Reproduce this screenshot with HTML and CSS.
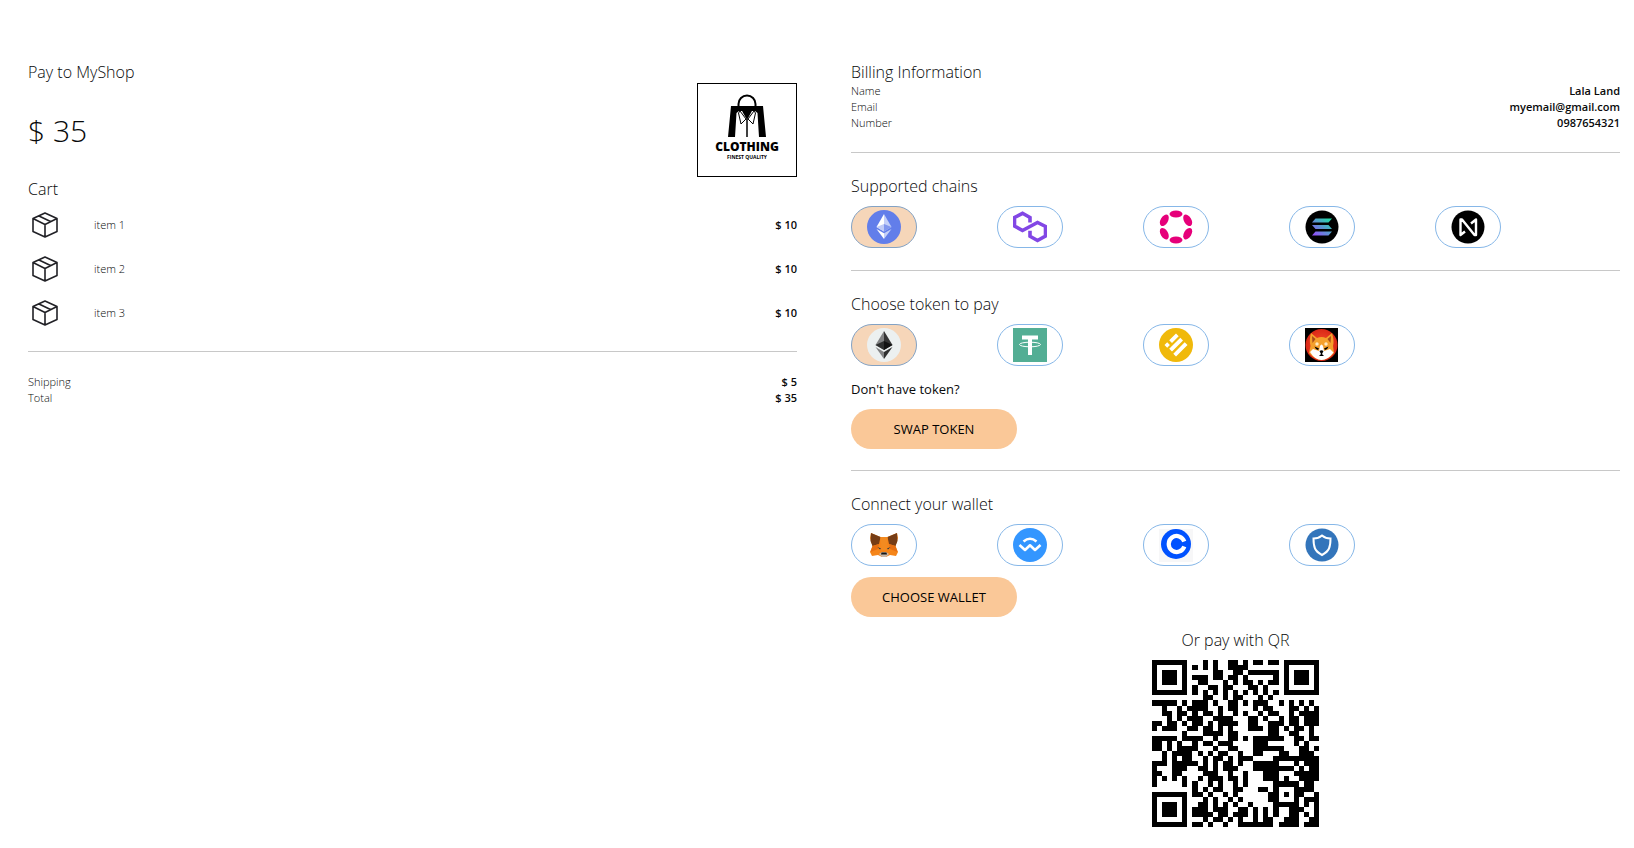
FILE: index.html
```
<!DOCTYPE html>
<html lang="en">
<head>
<meta charset="utf-8">
<title>Checkout</title>
<link rel="stylesheet" href="styles.css">
</head>
<body>
<svg class="defs" aria-hidden="true">
  <defs>
    <symbol id="box" viewBox="0 0 32 32"><g fill="none" stroke="#212126" stroke-width="1.600" stroke-linejoin="round"><path d="M16 4 28 9.500V22.500L16 28 4 22.500V9.500ZM4 9.500 16 15.500 28 9.500M16 15.500V28M10 7 22 12.700"/></g></symbol>
    <linearGradient id="sol" x1="0" y1="1" x2="1" y2="0"><stop offset="0" stop-color="#9945ff"/><stop offset="1" stop-color="#19e6a0"/></linearGradient>
    <radialGradient id="red"><stop offset="0" stop-color="#f8502c"/><stop offset="1" stop-color="#d92716"/></radialGradient>
  </defs>
</svg>
<main class="checkout">
  <section class="column">
    <header class="shop">
      <div>
        <h1 class="title">Pay to MyShop</h1>
        <p class="price">$ 35</p>
      </div>
      <div class="logo">
        <svg class="bag" viewBox="0 0 40 44" aria-hidden="true"><path d="M11.500 13V10a8.500 8.500 0 0 1 17 0v3" fill="none" stroke="#000" stroke-width="2"/><path d="M4 12H36L39 43H32L30.500 19 28 17H12L9.500 19 8 43H1Z"/><path d="M14.500 16 20 26 25.500 16Z"/><path d="M13 17 11.500 19 14 30 19 25ZM27 17 28.500 19 26 30 21 25Z" fill="#fff" stroke="#000"/><path d="M20 25V43" stroke="#000" stroke-width="1.500"/></svg>
        <strong class="brand">CLOTHING</strong>
        <span class="motto">FINEST QUALITY</span>
      </div>
    </header>
    <h2 class="title">Cart</h2>
    <ul class="items">
      <li class="item"><svg class="box" aria-hidden="true"><use href="#box"/></svg><span>item 1</span><b>$ 10</b></li>
      <li class="item"><svg class="box" aria-hidden="true"><use href="#box"/></svg><span>item 2</span><b>$ 10</b></li>
      <li class="item"><svg class="box" aria-hidden="true"><use href="#box"/></svg><span>item 3</span><b>$ 10</b></li>
    </ul>
    <hr class="rule rule-cart">
    <dl class="facts">
      <div class="fact"><dt>Shipping</dt><dd>$ 5</dd></div>
      <div class="fact"><dt>Total</dt><dd>$ 35</dd></div>
    </dl>
  </section>

  <section class="column">
    <h2 class="title">Billing Information</h2>
    <dl class="facts">
      <div class="fact"><dt>Name</dt><dd>Lala Land</dd></div>
      <div class="fact"><dt>Email</dt><dd>myemail@gmail.com</dd></div>
      <div class="fact"><dt>Number</dt><dd>0987654321</dd></div>
    </dl>
    <hr class="rule">

    <h2 class="title">Supported chains</h2>
    <div class="options">
      <button class="pill selected" aria-label="Ethereum"><svg class="icon" viewBox="0 0 34 34"><circle cx="17" cy="17" r="17" fill="#627eea"/><path d="M17 4 9.500 17 17 21.500Z" fill="#fff"/><path d="M17 4 24.500 17 17 21.500Z" fill="#c5d0f8"/><path d="M9.500 17 17 14V21.500Z" fill="#c1ccf7"/><path d="M24.500 17 17 14V21.500Z" fill="#8197ee"/><path d="M9.500 19 17 23.300V29Z" fill="#fff"/><path d="M24.500 19 17 23.300V29Z" fill="#c5d0f8"/></svg></button>
      <button class="pill" aria-label="Polygon"><svg class="icon" viewBox="0 0 34 34"><path d="M17 12.500V7.500L9.500 3.300 1.500 7.500V16L9.500 20.500 24.500 12.500 32.500 16.500V26L24.500 30.500 17 26.300V20.800" fill="none" stroke="#8247e5" stroke-width="3.600"/></svg></button>
      <button class="pill" aria-label="Polkadot"><svg class="icon" viewBox="0 0 34 34"><g fill="#e6007a"><ellipse cx="17" cy="4" rx="6.500" ry="3.500"/><ellipse cx="17" cy="30" rx="6.500" ry="3.500"/><ellipse cx="5.300" cy="10.300" rx="6.300" ry="3.700" transform="rotate(-60 5.300 10.300)"/><ellipse cx="28.700" cy="10.300" rx="6.300" ry="3.700" transform="rotate(60 28.700 10.300)"/><ellipse cx="5.300" cy="23.700" rx="6.300" ry="3.700" transform="rotate(60 5.300 23.700)"/><ellipse cx="28.700" cy="23.700" rx="6.300" ry="3.700" transform="rotate(-60 28.700 23.700)"/></g></svg></button>
      <button class="pill" aria-label="Solana"><svg class="icon" viewBox="0 0 34 34"><circle cx="17" cy="17" r="16.500"/><path d="M10.500 8.500H27L23.500 12.500H7ZM7 15H23.500L27 19H10.500ZM10.500 21.500H27L23.500 25.500H7Z" fill="url(#sol)"/></svg></button>
      <button class="pill" aria-label="Near"><svg class="icon" viewBox="0 0 34 34"><circle cx="17" cy="17" r="16.500"/><path d="M14 21.500 9.500 25V9.500H11L23.500 25H25V9.500L20 13.500" fill="none" stroke="#fff" stroke-width="2.400" stroke-linejoin="round"/></svg></button>
    </div>
    <hr class="rule">

    <h2 class="title">Choose token to pay</h2>
    <div class="options">
      <button class="pill selected" aria-label="ETH"><svg class="icon" viewBox="0 0 34 34"><circle cx="17" cy="17" r="17" fill="#ecf0f0"/><path d="M17 3 8.500 17 17 22Z" fill="#828384"/><path d="M17 3 25.500 17 17 22Z" fill="#343434"/><path d="M8.500 17 17 13V22Z" fill="#2f3030"/><path d="M25.500 17 17 13V22Z" fill="#131313"/><path d="M8.500 19 17 24V31Z" fill="#828384"/><path d="M25.500 19 17 24V31Z" fill="#2f3030"/></svg></button>
      <button class="pill" aria-label="USDT"><svg class="icon" viewBox="0 0 34 34"><path d="M0 0H34V34H0Z" fill="#53ae94"/><path d="M9 7.500H25V11.500H19V27H15V11.500H9Z" fill="#fff"/><ellipse cx="17" cy="16.500" rx="10.500" ry="2.300" fill="none" stroke="#fff"/></svg></button>
      <button class="pill" aria-label="BUSD"><svg class="icon" viewBox="0 0 34 34"><circle cx="17" cy="17" r="17" fill="#f0b90b"/><g fill="#fff"><path d="M17 5.500 19.700 8.200 13 15 10.200 12.200ZM8.200 14.300 10.900 17 8.200 19.700 5.500 17ZM21.300 9.800 24 12.500 13 23.500 10.200 20.800ZM25.700 14.300 28.500 17 17 28.500 14.300 25.700Z"/></g></svg></button>
      <button class="pill" aria-label="SHIB"><svg class="icon" viewBox="0 0 34 34"><path d="M0 0H33V34H0Z"/><circle cx="16.500" cy="17" r="16" fill="url(#red)"/><path d="M6 5 12 10Q16.500 8 21 10L27 5Q29.500 13 28 18L29 25Q23 32 16.500 32 10 32 4 25L5.500 18Q4 12 6 5Z" fill="#f5a02c"/><path d="M7 8 10.500 11 7.500 15ZM26 8 22.500 11 25.500 15Z" fill="#a84a18"/><path d="M5 24 8 21 14 23 15 18Q16.500 15 18 18L19 23 25 21 28.500 24.500Q23 32 16.500 32 10 32 5 24Z" fill="#fff"/><circle cx="12" cy="16" r="1.700" fill="#ffe8bf"/><circle cx="21" cy="16" r="1.700" fill="#ffe8bf"/><path d="M9.500 18.500 14 20.500 13 22Q10.500 21.500 9.500 18.500ZM23.500 18.500 19 20.500 20 22Q22.500 21.500 23.500 18.500ZM14.500 23Q16.500 21.500 18.500 23L17 26 19 28H14L16 26Z"/></svg></button>
    </div>
    <p class="hint">Don't have token?</p>
    <button class="action">SWAP TOKEN</button>
    <hr class="rule">

    <h2 class="title">Connect your wallet</h2>
    <div class="options">
      <button class="pill" aria-label="MetaMask"><svg class="icon" viewBox="0 0 34 34"><path d="M4 5 13.500 9H20.500L30 5 31 10 28.500 18 31 24 29 28 23 27 19 29H15L11 27 5 28 3 24 5.500 18 3 10Z" fill="#f58519"/><path d="M4 5 13.500 9 12 16 5.500 18 3.500 13ZM30 5 20.500 9 22 16 28.500 18 30.500 13Z" fill="#763d16"/><path d="M13.500 9H20.500L19.500 22H14.500Z" fill="#f28a20"/><path d="M5.500 18 12 16 11 21 3.500 24ZM28.500 18 22 16 23 21 30.500 24Z" fill="#e66f13"/><path d="M10.500 19 14 20.500 13 21.500ZM23.500 19 20 20.500 21 21.500Z" fill="#233447"/><path d="M12 26 15 24H19L22 26 19 29H15Z" fill="#c9b8a9"/><path d="M14.500 24.500H19.500L20 26.500H14Z" fill="#161616"/></svg></button>
      <button class="pill" aria-label="WalletConnect"><svg class="icon" viewBox="0 0 34 34"><circle cx="17" cy="17" r="17" fill="#3396ff"/><path d="M10.500 13.500Q17 8 23.500 13.500M6.500 17 12 22 17 17.300 22 22 27.500 17" fill="none" stroke="#fff" stroke-width="2.600" stroke-linejoin="round"/></svg></button>
      <button class="pill" aria-label="Coinbase"><svg class="icon" viewBox="0 0 34 34"><path d="M0 1H34V34H0Z" fill="#f7f7f8"/><circle cx="17" cy="16" r="15" fill="#0052ff"/><path d="M25.300 13.500A8 8 0 1 0 25.300 18.500" fill="none" stroke="#fff" stroke-width="4.200"/></svg></button>
      <button class="pill" aria-label="Trust Wallet"><svg class="icon" viewBox="0 0 34 34"><circle cx="17" cy="17" r="16.500" fill="#3375bb"/><path d="M17 7.500Q20.500 10.500 25.500 10.500 25.500 17 24 20.500 22.500 24 17 27 11.500 24 10 20.500 8.500 17 8.500 10.500 13.500 10.500 17 7.500Z" fill="none" stroke="#fff" stroke-width="2"/></svg></button>
    </div>
    <button class="action action-wallet">CHOOSE WALLET</button>
    <div class="scan">
      <h2 class="title">Or pay with QR</h2>
      <svg class="qr" id="qr" viewBox="0 0 33 33" role="img" aria-label="Payment QR code" shape-rendering="crispEdges"></svg>
    </div>
  </section>
</main>
<script src="qr.js"></script>
</body>
</html>
```
FILE: styles.css
```
* { box-sizing: border-box; }
body {
  margin: 0;
  background: #fff;
  color: #08090a;
  font-family: "Open Sans", "Noto Sans", sans-serif;
  font-size: 11px;
  font-weight: 300;
  line-height: 16px;
}
h1, h2, p, dl, dd, ul { margin: 0; padding: 0; }
button { font: inherit; color: #000; cursor: pointer; }
.defs { position: absolute; width: 0; height: 0; }
.checkout {
  display: grid;
  grid-template-columns: 1fr 1fr;
  gap: 54px;
  padding: 60px 14px 20px 28px;
}
.title { padding-top: 2px; font-size: 16px; font-weight: 300; line-height: 21px; }
.shop { display: flex; justify-content: space-between; height: 117px; }
.price { margin-top: 24px; font-size: 30px; line-height: 48px; }
.logo {
  display: flex;
  flex-direction: column;
  align-items: center;
  width: 100px;
  height: 94px;
  margin-top: 23px;
  padding-top: 10px;
  border: 1px solid #000;
  color: #000;
}
.bag { width: 40px; height: 44px; }
.brand { margin-top: 2px; font: 800 12px/14px "Open Sans", sans-serif; }
.motto { font: 700 5px/6px "Open Sans", sans-serif; }
.items { list-style: none; margin-top: 3px; }
.item { display: flex; align-items: center; height: 44px; }
.item span { margin-left: 33px; }
.item b { margin-left: auto; font-weight: 600; }
.box { width: 32px; height: 32px; margin-left: 1px; }
.rule { height: 1px; margin: 21px 0; border: 0; background: #c8c8c8; }
.options + .rule { margin-top: 22px; }
.rule-cart { margin: 16px 0 22px; }
.fact { display: flex; justify-content: space-between; }
.fact dd { font-weight: 600; }
.options { display: flex; gap: 80px; margin-top: 9px; }
.pill {
  display: flex;
  align-items: center;
  justify-content: center;
  width: 66px;
  height: 42px;
  padding: 0;
  border: 1px solid #86b7e8;
  border-radius: 21px;
  background: #fff;
}
.selected { border-color: #83a2c4; background: #f6d6b9; }
.icon { width: 34px; height: 34px; }
.hint { margin-top: 15px; font-size: 13px; font-weight: 500; }
.action {
  display: block;
  width: 166px;
  height: 40px;
  margin-top: 12px;
  padding: 0;
  border: 0;
  border-radius: 20px;
  background: #fac898;
  font-size: 13px;
  font-weight: 500;
}
.action-wallet { margin-top: 11px; }
.scan { display: flex; flex-direction: column; align-items: center; margin-top: 11px; }
.qr { width: 167px; height: 167px; margin-top: 9px; }
```
FILE: qr.js
```
const rows = [
  "#######...#.#..##.#.##.##.#######",
  "#.....#.#.#.#..####.......#.....#",
  "#.###.#.....##..##.######.#.###.#",
  "#.###.#.###.##.##.#.....#.#.###.#",
  "#.###.#..##...#.#.##.#.##.#.###.#",
  "#.....#.#..##.##...##.#...#.....#",
  "#######.#.#.#.#.#.#.#.#.#.#######",
  "..........##..#.##...#.#.........",
  "#####.#.###.#..##.#.###..#.#.#.#.",
  "..#..#.####..#.##...#.##...##.#.#",
  "..##.##.#.##.#..#.#..#.##..#.####",
  "...#.#.###..####...##.#..#.##.###",
  "##.##.#.##.#.####..##..###.##.###",
  "#.###..##.##.#.#...###.##.#.##.#.",
  "......#...####.##......##..##..#.",
  "#####.####..#..##.#.######..##.##",
  "##.#.#..#.##.###....###.....#.#..",
  "##.#.####...#..##...######...##.#",
  "..#.####.#.#.##..#..##...##..###.",
  "..#.#.##..#.##.#.###....#########",
  "###.#####.#.#.##.#..#####...#.###",
  "#...###..##.#.###...########.#.##",
  "##..##....###..#..#...###...#####",
  "#.#.#.#..#.###.##.#...###.#..####",
  "#.....#.#..#.#..#.#.....#####.##.",
  "........#.#.##..##...##.#...####.",
  "#######.##.#..#.#......##.#.##..#",
  "#.....#...#.#..#.#.....##...#.###",
  "#.###.#..##.#.#.#..#....#####.#.#",
  "#.###.#.###.###..##.#.#.#..###..#",
  "#.###.#.####.##.###.#.#.#..##.#.#",
  "#.....#...#.##.#.#..#.##..###..##",
  "#######.##.#..#..#######.####.###"
];

// Each dark module becomes one unit square of a single path.
let d = "";
rows.forEach((row, y) => [...row].forEach((cell, x) => {
  if (cell === "#") d += `M${x} ${y}h1v1h-1z`;
}));
const path = document.createElementNS("http://www.w3.org/2000/svg", "path");
path.setAttribute("d", d);
document.getElementById("qr").append(path);
```
